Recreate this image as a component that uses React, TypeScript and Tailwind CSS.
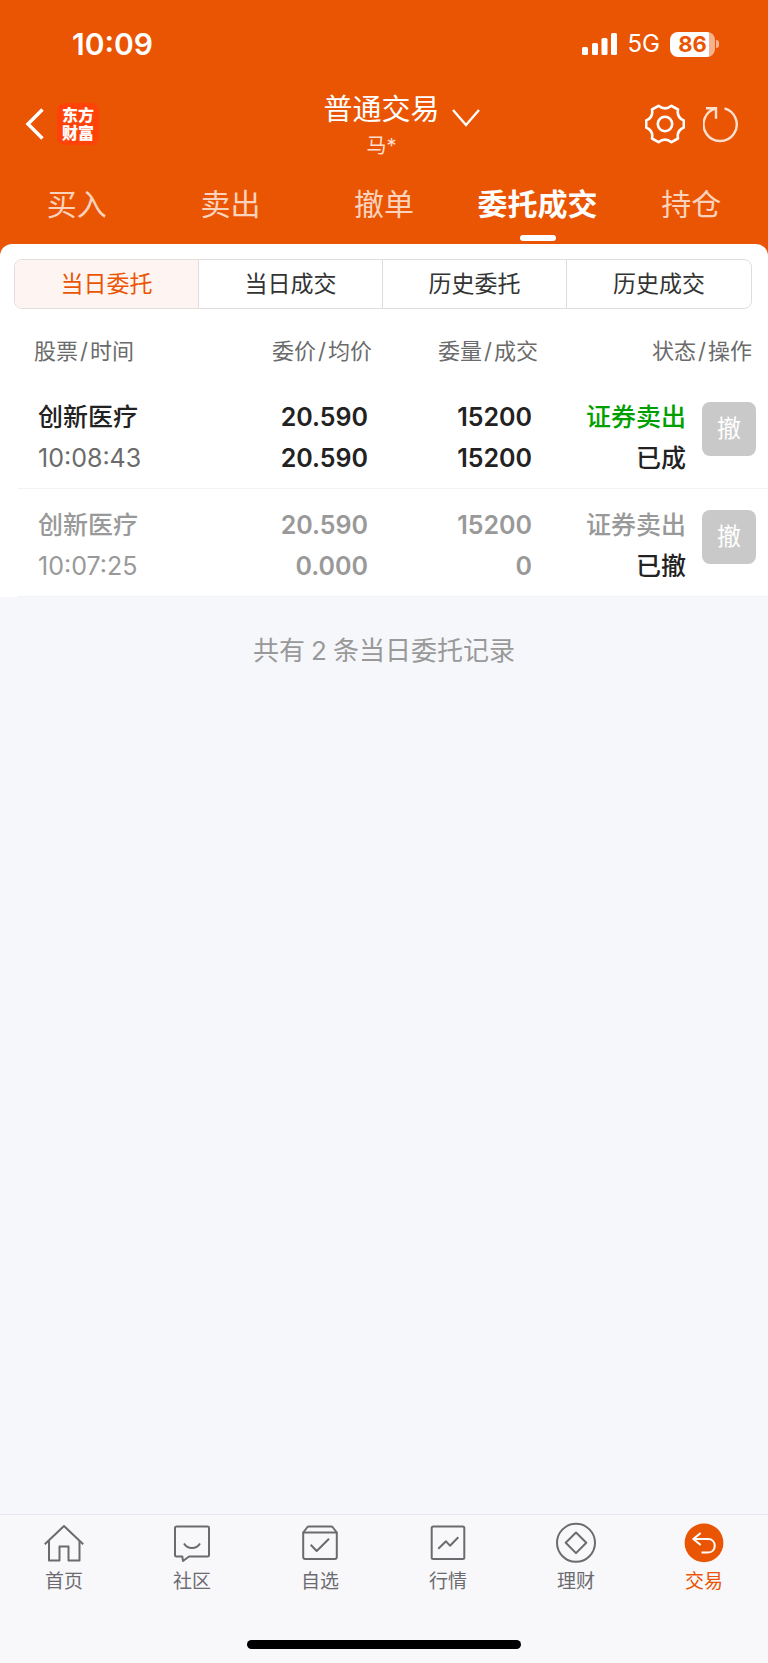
import React, { useState } from "react";

const tabs = ["买入", "卖出", "撤单", "委托成交", "持仓"];
const filters = ["当日委托", "当日成交", "历史委托", "历史成交"];

const orders = [
  {
    name: "创新医疗",
    time: "10:08:43",
    price: "20.590",
    avgPrice: "20.590",
    amount: "15200",
    dealt: "15200",
    side: "证券卖出",
    status: "已成",
    cancelled: false,
  },
  {
    name: "创新医疗",
    time: "10:07:25",
    price: "20.590",
    avgPrice: "0.000",
    amount: "15200",
    dealt: "0",
    side: "证券卖出",
    status: "已撤",
    cancelled: true,
  },
];

const navItems = [
  {
    label: "首页",
    icon: (
      <>
        <path d="M.8 22.300 20 4l19.200 18.300" />
        <path d="M5 19v19.500h10.500V24.500h9V38.500H35.500V19" />
      </>
    ),
  },
  {
    label: "社区",
    icon: (
      <>
        <path d="M4.500 4.500h31a1.500 1.500 0 0 1 1.500 1.500v27a1.500 1.500 0 0 1-1.500 1.500H17l-6 4.500-.7-4.500H4.500A1.500 1.500 0 0 1 3 33V6a1.500 1.500 0 0 1 1.500-1.500z" />
        <path d="M12 21.500c3.500 6 12.500 6 16 0" />
      </>
    ),
  },
  {
    label: "自选",
    icon: (
      <>
        <path d="M3.200 10.500h33.600V35a2 2 0 0 1-2 2H5.200a2 2 0 0 1-2-2z" />
        <path d="M3.200 10.500 7.500 5q.5-.6 1.300-.6h22.400q.8 0 1.300.6l4.300 5.500" />
        <path d="m10.700 22.700 6 6.300L29 16.700" />
      </>
    ),
  },
  {
    label: "行情",
    icon: (
      <>
        <rect x="3.700" y="4.500" width="32.600" height="32.600" rx="1.500" />
        <path d="m10.300 26.700 7.700-7.400 4 4.400 8.300-8.500" />
      </>
    ),
  },
  {
    label: "理财",
    icon: (
      <>
        <circle cx="20" cy="20.800" r="19" />
        <path d="M20 10.500 30.300 20.800 20 31.100 9.700 20.800z" />
      </>
    ),
  },
  {
    label: "交易",
    icon: (
      <>
        <circle cx="20" cy="20.800" r="19.400" fill="#ea5504" stroke="none" />
        <path
          d="M16.700 11 9.300 17l7.400 6M9.500 17H24c9 0 9 13.500 0 13.500h-6.500"
          stroke="#fff"
        />
      </>
    ),
  },
];

const StatusBar = () => (
  <div className="flex h-[88px] items-center justify-between pl-[72px] pr-[49px]">
    <span className="text-[30px] font-semibold">10:09</span>
    <div className="flex items-center">
      <svg width="36" height="22" viewBox="0 0 36 22" fill="currentColor" aria-hidden="true">
        <rect x="0" y="14" width="6" height="8" rx="1.500" />
        <rect x="10" y="10" width="6" height="12" rx="1.500" />
        <rect x="19.500" y="5" width="6" height="17" rx="1.500" />
        <rect x="29" y="0" width="6" height="22" rx="1.500" />
      </svg>
      <span className="ml-2.5 text-2xl">5G</span>
      <span className="ml-2.5 flex h-[25px] w-[45px] items-center justify-center rounded-lg bg-[linear-gradient(90deg,#fff_86%,#f7b18c_86%)] text-[22px] font-bold text-[#ea5504]">
        86
      </span>
      <span className="ml-px h-2 w-[3px] rounded-r-full bg-[#f7b18c]" />
    </div>
  </div>
);

const TitleBar = () => (
  <div className="grid h-[72px] grid-cols-[1fr_auto_1fr] items-start pl-6 pr-[29px]">
    <div className="flex items-center gap-3 pt-[15px]">
      <button type="button" aria-label="返回">
        <svg width="21" height="34" viewBox="0 0 21 34" fill="none" stroke="currentColor" strokeWidth="3.500" aria-hidden="true">
          <path d="M18.500 2.500 4 17l14.500 14.500" />
        </svg>
      </button>
      <span className="flex size-[42px] flex-col items-center justify-center rounded-lg bg-[#ff4208] text-base leading-[18px] font-black">
        <span>东方</span>
        <span>财富</span>
      </span>
    </div>
    <button type="button" className="grid grid-cols-[28px_auto_28px] items-center gap-x-3 pt-1">
      <span className="col-start-2 text-[29px] leading-9">普通交易</span>
      <svg width="28" height="18" viewBox="0 0 28 18" fill="none" stroke="currentColor" strokeWidth="2.400" className="mt-4" aria-hidden="true">
        <path d="M1 1l13 15L27 1" />
      </svg>
      <span className="col-start-2 text-xl leading-9 text-[#fde0d0]">马*</span>
    </button>
    <div className="flex items-center justify-end gap-[18px] pt-4">
      <button type="button" aria-label="设置">
        <svg width="40" height="40" viewBox="0 0 40 40" fill="none" stroke="currentColor" strokeWidth="2.600" strokeLinejoin="round" aria-hidden="true">
          <path d="M13.500 1.800Q20 7 26.500 1.800L33 5.500Q31.500 13.500 38.800 16.500v7Q31.500 26.500 33 34.500l-6.500 3.700Q20 33 13.500 38.200L7 34.500Q8.500 26.500 1.200 23.500v-7Q8.500 13.500 7 5.500z" />
          <circle cx="20" cy="20" r="7.200" />
        </svg>
      </button>
      <button type="button" aria-label="刷新">
        <svg width="36" height="38" viewBox="0 0 36 38" fill="none" stroke="#fde0d0" strokeWidth="2.400" aria-hidden="true">
          <path d="M21.500 3.400A16.600 16.600 0 1 1 12.800 3.400M3 3.200h10v10.500" />
        </svg>
      </button>
    </div>
  </div>
);

const Slash = () => <span className="mx-0.5">/</span>;

const App = () => {
  const [activeTab, setActiveTab] = useState("委托成交");
  const [activeFilter, setActiveFilter] = useState("当日委托");
  const [activeNav, setActiveNav] = useState("交易");

  return (
    <div className="flex min-h-screen flex-col bg-[#f6f7fa] font-[Inter,'Noto_Sans_CJK_SC',sans-serif] text-[#222]">
      <div className="bg-[#ea5504]">
        <header className="text-white">
          <StatusBar />
          <TitleBar />
          <nav className="grid grid-cols-5">
            {tabs.map((tab) => (
              <button
                key={tab}
                type="button"
                onClick={() => setActiveTab(tab)}
                className={`flex h-[84px] flex-col items-center pt-6 text-[30px] leading-10 ${
                  tab === activeTab ? "font-bold" : "text-[#fbd3bd]"
                }`}
              >
                {tab}
                {tab === activeTab && <span className="mt-[11px] h-1.5 w-9 rounded-full bg-white" />}
              </button>
            ))}
          </nav>
        </header>

        <main className="rounded-t-xl bg-white pt-[15px]">
          <div className="mr-4 ml-3.5 grid h-[50px] grid-cols-4 divide-x divide-[#dcdce4] overflow-hidden rounded-lg border border-[#e3dcdf]">
            {filters.map((filter) => (
              <button
                key={filter}
                type="button"
                onClick={() => setActiveFilter(filter)}
                className={`text-[23px] ${
                  filter === activeFilter ? "bg-[#fef5f2] text-[#ea5504]" : "text-[#333]"
                }`}
              >
                {filter}
              </button>
            ))}
          </div>

          <div className="pl-[18px]">
            <table className="w-full table-fixed text-right">
              <colgroup>
                <col />
                <col className="w-[166px]" />
                <col className="w-[166px]" />
                <col className="w-[154px]" />
                <col className="w-[74px]" />
              </colgroup>
              <thead>
                <tr className="h-[72px] text-[22px] text-[#6b6b6b]">
                  <th className="pt-3 pl-4 text-left font-normal">
                    股票<Slash />时间
                  </th>
                  <th className="pt-3 pr-0.5 font-normal">
                    委价<Slash />均价
                  </th>
                  <th className="pt-3 pr-0.5 font-normal">
                    委量<Slash />成交
                  </th>
                  <th colSpan={2} className="pt-3 pr-4 font-normal">
                    状态<Slash />操作
                  </th>
                </tr>
              </thead>
              <tbody className="text-[25px] leading-[41px]">
                {orders.map((order) => (
                  <tr
                    key={order.time}
                    className={`border-b border-[#f2f3f6] align-top font-semibold ${
                      order.cancelled ? "text-[#999]" : ""
                    }`}
                  >
                    <td className="pt-4 pb-[9px] pl-5 text-left">
                      <div className="font-medium">{order.name}</div>
                      <div className={`font-normal ${order.cancelled ? "" : "text-[#6b6b6b]"}`}>
                        {order.time}
                      </div>
                    </td>
                    <td className="pt-4 pr-1.5">
                      <div>{order.price}</div>
                      <div>{order.avgPrice}</div>
                    </td>
                    <td className="pt-4 pr-2">
                      <div>{order.amount}</div>
                      <div>{order.dealt}</div>
                    </td>
                    <td className="pt-4 pr-2 font-medium">
                      <div className={order.cancelled ? "" : "text-[#009f00]"}>{order.side}</div>
                      <div className="text-[#222]">{order.status}</div>
                    </td>
                    <td className="pt-[21px] pr-3">
                      <button
                        type="button"
                        disabled
                        className="ml-auto flex size-[54px] items-center justify-center rounded-lg bg-[#c9c9c9] text-2xl font-normal text-white"
                      >
                        撤
                      </button>
                    </td>
                  </tr>
                ))}
              </tbody>
            </table>
          </div>
        </main>
      </div>

      <p className="flex-1 pt-[34px] text-center text-[26px] text-[#999]">
        共有<span className="mx-1.5">{orders.length}</span>条当日委托记录
      </p>

      <footer className="border-t border-[#e6e7ef] bg-[#f8f8fb] pb-3.5">
        <nav className="grid grid-cols-6">
          {navItems.map((item) => (
            <button
              key={item.label}
              type="button"
              onClick={() => setActiveNav(item.label)}
              className={`flex flex-col items-center pt-[7px] text-[19px] leading-7 ${
                item.label === activeNav ? "text-[#ea5504]" : "text-[#6b6b6f]"
              }`}
            >
              <svg width="40" height="42" viewBox="0 0 40 42" fill="none" stroke="currentColor" strokeWidth="2" strokeLinejoin="round" className="mb-1" aria-hidden="true">
                {item.icon}
              </svg>
              {item.label}
            </button>
          ))}
        </nav>
        <div className="mx-auto mt-11 h-[9px] w-[274px] rounded-full bg-black" />
      </footer>
    </div>
  );
};

export default App;
